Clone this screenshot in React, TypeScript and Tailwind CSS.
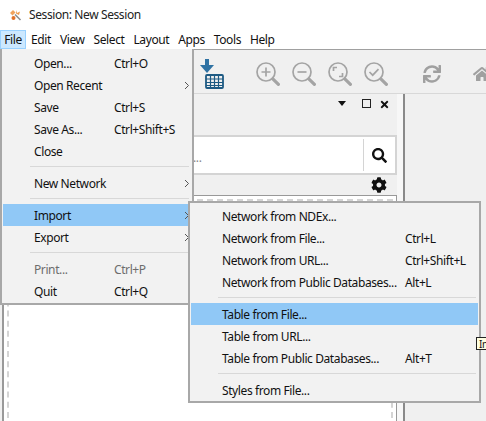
import { FaCog, FaHome, FaSearch, FaSync, FaTimes } from "react-icons/fa";

const fileMenu = [
  { label: "Open...", shortcut: "Ctrl+O" },
  { label: "Open Recent", arrow: true },
  { label: "Save", shortcut: "Ctrl+S" },
  { label: "Save As...", shortcut: "Ctrl+Shift+S" },
  { label: "Close" },
  { separator: true, label: "a" },
  { label: "New Network", arrow: true },
  { separator: true, label: "b" },
  { label: "Import", arrow: true, active: true },
  { label: "Export", arrow: true },
  { separator: true, label: "c" },
  { label: "Print...", shortcut: "Ctrl+P", disabled: true },
  { label: "Quit", shortcut: "Ctrl+Q" },
];

const importMenu = [
  { label: "Network from NDEx..." },
  { label: "Network from File...", shortcut: "Ctrl+L" },
  { label: "Network from URL...", shortcut: "Ctrl+Shift+L" },
  { label: "Network from Public Databases...", shortcut: "Alt+L" },
  { separator: true, label: "a" },
  { label: "Table from File...", active: true },
  { label: "Table from URL..." },
  { label: "Table from Public Databases...", shortcut: "Alt+T" },
  { separator: true, label: "b" },
  { label: "Styles from File..." },
];

type Item = {
  label: string;
  shortcut?: string;
  arrow?: boolean;
  active?: boolean;
  disabled?: boolean;
  separator?: boolean;
};

const MenuRow = ({ item, labelWidth }: { item: Item; labelWidth: string }) => {
  if (item.separator) {
    return (
      <div className="h-[10px] pl-[28px] pr-[3px] pt-[4px]">
        <div className="h-px bg-[#d8d8d8]"></div>
      </div>
    );
  }
  return (
    <div
      className={`mx-px flex h-[22px] items-center pl-[31px] pt-px ${item.active ? "bg-[#90c8f6]" : ""} ${
        item.disabled ? "text-[#6d6d6d]" : "text-[#111]"
      }`}
    >
      <span className={`whitespace-nowrap ${labelWidth}`}>{item.label}</span>
      <span className="whitespace-nowrap">{item.shortcut}</span>
      {item.arrow && (
        <svg className="ml-auto mr-[1px] h-[9px] w-[6px]" viewBox="0 0 6 9">
          <path d="M1 1l3.5 3.5L1 8" fill="none" stroke="#555" strokeWidth="1" />
        </svg>
      )}
    </div>
  );
};

const Magnifier = ({ mark }: { mark: React.ReactNode }) => (
  <svg className="h-[24px] w-[24px]" viewBox="0 0 24 24" fill="none" stroke="#a4a4a4">
    <circle cx="10" cy="10" r="9" strokeWidth="1.7" />
    <path d="M16.8 16.8l5.6 5.6" strokeWidth="3.2" strokeLinecap="round" />
    {mark}
  </svg>
);

const TableImport = () => (
  <svg className="mt-[4px] h-[30px] w-[25px] shrink-0" viewBox="0 0 25 30">
    <path d="M5 0h4v6h5l-7 8-7-8h5z" fill="#2f72a3" />
    <rect x="6" y="16" width="17" height="13" rx="1" fill="none" stroke="#1d5a83" strokeWidth="1.8" />
    <path d="M6 20h17M6 23.5h17M6 26.5h17M10.5 16v13M14.5 16v13M18.5 16v13" stroke="#1d5a83" strokeWidth="1.2" />
  </svg>
);

const AppLogo = () => (
  <svg className="h-[12px] w-[12px]" viewBox="0 0 12 12">
    <path d="M0 4l3-3 2.5 2.5-3 3z" fill="#f0a35e" />
    <path d="M6 1l1 3 3-1.5-1 3.5-3-1.5z" fill="#ee9a4d" />
    <path d="M5 5.5l5.5 5.5" stroke="#8d8d8d" strokeWidth="1.6" />
    <circle cx="3.5" cy="9" r="2" fill="#e2722a" />
  </svg>
);

export default function App() {
  return (
    <div className="relative h-[421px] w-[486px] overflow-hidden bg-white font-['Noto_Sans',sans-serif] text-[12px] leading-none tracking-[-0.4px] text-[#111]">
      <div className="flex h-[30px] items-center gap-[7px] pl-[10px]">
        <AppLogo />
        <span className="text-[#222]">Session: New Session</span>
      </div>

      <div className="flex h-[19px] items-center gap-[9px]">
        <span className="flex h-[19px] w-[26px] items-center justify-center border border-[#99d1ff] bg-[#cce8ff]">File</span>
        <span className="ml-[-4px]">Edit</span>
        <span>View</span>
        <span>Select</span>
        <span>Layout</span>
        <span>Apps</span>
        <span>Tools</span>
        <span>Help</span>
      </div>

      <div className="flex h-[45px] items-center border-y border-t-[#a0a0a0] border-b-[#d8d8d8] bg-[#f0f0f0] pl-[200px]">
        <TableImport />
        <div className="ml-[31px] mt-[4px] flex gap-[12px]">
          <Magnifier mark={<path d="M5.5 10h9M10 5.5v9" strokeWidth="1.7" />} />
          <Magnifier mark={<path d="M5.5 10h9" strokeWidth="1.7" />} />
          <Magnifier mark={<path d="M5.5 9V5.5H9M14.5 11v3.5H11" strokeWidth="1.7" />} />
          <Magnifier mark={<path d="M5.5 10l3.2 3.2 5.8-6" strokeWidth="1.7" />} />
        </div>
        <FaSync className="ml-[35px] mt-[4px] shrink-0 text-[18px] text-[#a0a0a0]" />
        <FaHome className="ml-[32px] mt-[4px] shrink-0 text-[18px] text-[#a0a0a0]" />
      </div>

      <div className="flex h-[327px] bg-[#f0f0f0] pl-[2px]">
        <div className="flex h-full w-[395px] flex-col border-l border-[#999]">
          <div className="flex h-[41px] shrink-0 items-start justify-end pr-[7px] pt-[5px]">
            <svg className="mr-[16px] mt-[2px] h-[5px] w-[8px]" viewBox="0 0 8 5">
              <path d="M0 0h8L4 5z" fill="#111" />
            </svg>
            <div className="mr-[8px] h-[9px] w-[9px] border border-[#222]"></div>
            <FaTimes className="mb-auto text-[11px] text-[#111]" />
          </div>
          <div className="flex h-[40px] shrink-0 items-center border-2 border-[#d4d4d4] bg-white pr-[8px]">
            <span className="pl-[188px] pt-[6px] text-[#888]">...</span>
            <div className="ml-auto mr-[8px] h-[32px] w-px bg-[#d4d4d4]"></div>
            <FaSearch className="text-[15px] text-[#111]" />
          </div>
          <div className="flex h-[20px] shrink-0 items-center justify-end pr-[10px]">
            <FaCog className="text-[16px] text-[#111]" />
          </div>
          <div className="min-h-0 flex-1 border-x border-t border-[#999] bg-white p-[3px]">
            <div className="h-[300px] border-2 border-dashed border-[#d4d4d4]"></div>
          </div>
        </div>
        <div className="h-full w-[6px] bg-[#f7f7f7]"></div>
        <div className="h-full w-[2px] bg-[#8a8a8a]"></div>
      </div>

      <div className="absolute left-0 top-[49px] h-[256px] w-[194px] border-2 border-t-0 border-[#a8a8a8] bg-[#f2f2f2] pt-[3px]">
        {fileMenu.map((item) => (
          <MenuRow key={item.label} item={item} labelWidth="w-[80px]" />
        ))}
      </div>

      <div className="absolute left-[188px] top-[201px] h-[202px] w-[293px] border-2 border-[#a8a8a8] bg-[#f2f2f2] pt-[2px]">
        {importMenu.map((item) => (
          <MenuRow key={item.label} item={item} labelWidth="w-[183px]" />
        ))}
      </div>

      <div className="absolute left-[476px] top-[337px] flex h-[13px] w-[20px] items-center border border-[#222] bg-[#ffffe1] pl-[2px] text-[10px]">
        In
      </div>
    </div>
  );
}
